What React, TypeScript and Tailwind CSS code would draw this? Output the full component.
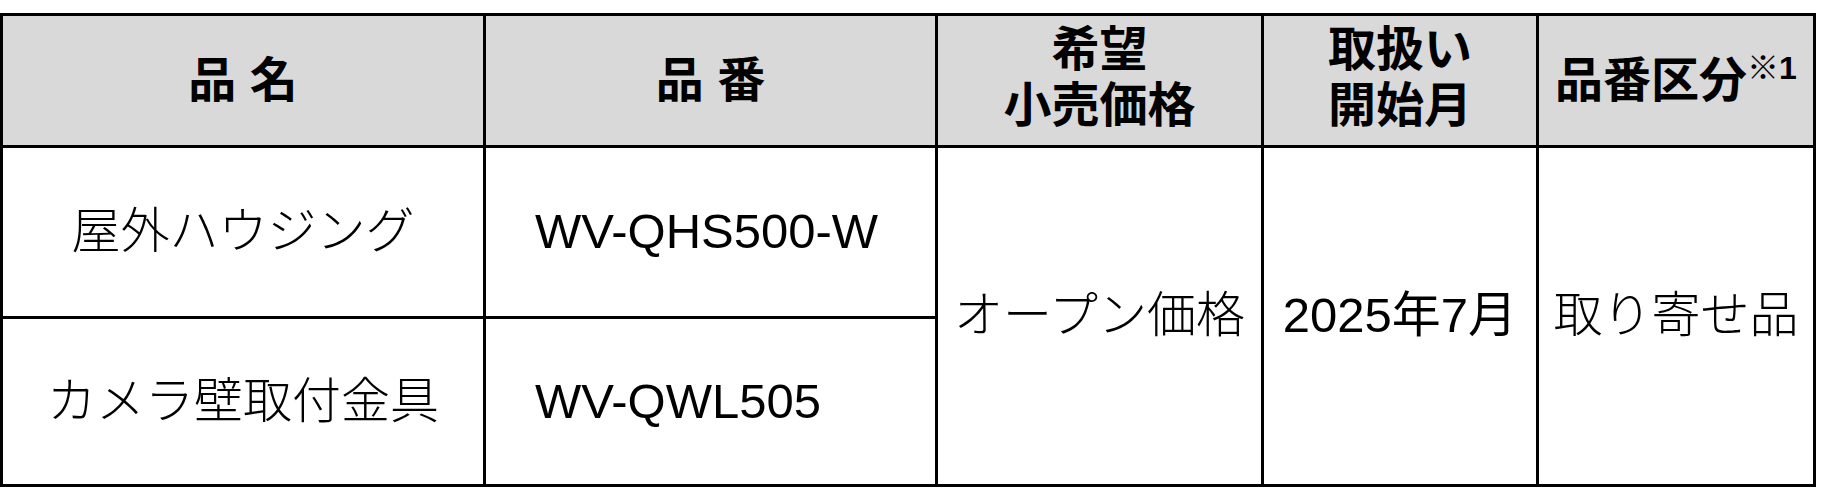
const font = "font-['Liberation_Sans','Noto_Sans_CJK_JP',sans-serif]";

export default function App() {
  return (
    <div className={`bg-white w-[1822px] h-[490px] pt-[13px] ${font} text-black`}>
      <div className="grid w-fit grid-cols-[480px_449px_323px_272px_274px] grid-rows-[129px_168px_165px] gap-[3px] p-[3px] bg-black">
        {/* header */}
        <div className="bg-[#d9d9d9] flex items-center justify-center text-[48px] font-bold">品 名</div>
        <div className="bg-[#d9d9d9] flex items-center justify-center text-[48px] font-bold">品 番</div>
        <div className="bg-[#d9d9d9] flex flex-col items-center justify-center text-[48px] font-bold leading-[56px] pb-[6px]">
          <span>希望</span>
          <span>小売価格</span>
        </div>
        <div className="bg-[#d9d9d9] flex flex-col items-center justify-center text-[48px] font-bold leading-[56px] pb-[6px]">
          <span>取扱い</span>
          <span>開始月</span>
        </div>
        <div className="bg-[#d9d9d9] flex items-center justify-center text-[48px] font-bold">
          <span className="whitespace-nowrap">
            品番区分<span className="align-[18px] text-[32px] leading-none">※1</span>
          </span>
        </div>

        {/* body */}
        <div className="bg-white flex items-center justify-center text-[49px] font-light">屋外ハウジング</div>
        <div className="bg-white flex items-center pl-[49px] text-[49px]">WV-QHS500-W</div>
        <div className="bg-white row-span-2 flex items-center justify-center text-[49px] font-light">オープン価格</div>
        <div className="bg-white row-span-2 flex items-center justify-center text-[49px]">2025年7月</div>
        <div className="bg-white row-span-2 flex items-center justify-center text-[49px] font-light">取り寄せ品</div>

        <div className="bg-white flex items-center justify-center text-[49px] font-light">カメラ壁取付金具</div>
        <div className="bg-white flex items-center pl-[49px] text-[49px]">WV-QWL505</div>
      </div>
    </div>
  );
}
